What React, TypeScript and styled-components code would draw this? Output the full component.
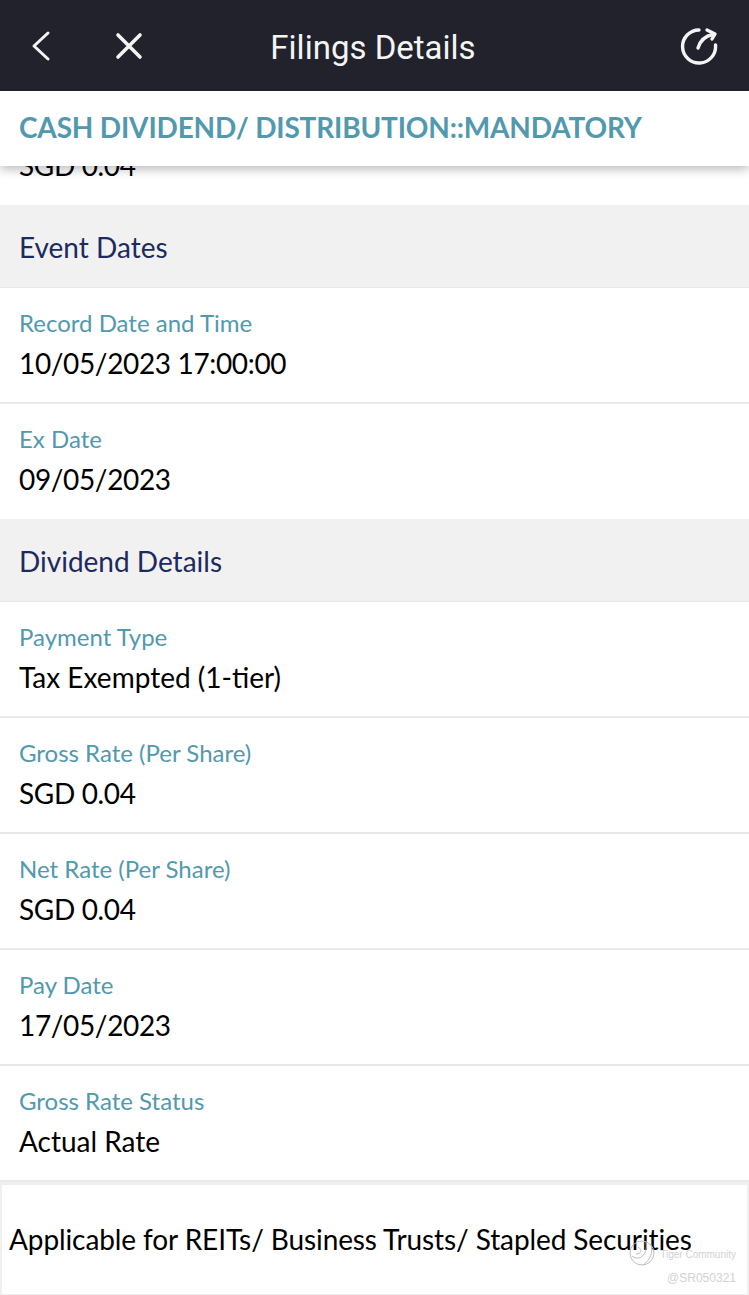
import React from 'react';
import styled, { createGlobalStyle } from 'styled-components';

const GlobalStyle = createGlobalStyle`
  html, body {
    margin: 0;
    padding: 0;
    background: #fff;
  }
  body {
    font-family: Lato, "Liberation Sans", sans-serif;
  }
`;

const Page = styled.div`
  width: 749px;
  height: 1295px;
  overflow: hidden;
  display: flex;
  flex-direction: column;
`;

const TopBar = styled.header`
  position: relative;
  z-index: 3;
  flex: none;
  height: 91px;
  background: #21222c;
  display: grid;
  grid-template-columns: 170px 1fr 170px;
  align-items: center;
  color: #f4f4f4;
`;

const NavLeft = styled.div`
  display: flex;
  align-items: center;
  gap: 57px;
  padding-left: 28px;
`;

const NavRight = styled.div`
  display: flex;
  justify-content: flex-end;
  padding-right: 31px;
`;

const IconSvg = styled.svg`
  display: block;
  fill: none;
  stroke: #f4f4f4;
  stroke-linecap: round;
  stroke-linejoin: round;
`;

const BarTitle = styled.h1`
  margin: 0;
  padding-right: 3px;
  text-align: center;
  font-family: Roboto, sans-serif;
  font-size: 33px;
  font-weight: 400;
  position: relative;
  top: 2px;
`;

const FilingType = styled.div`
  position: relative;
  z-index: 2;
  flex: none;
  height: 75px;
  background: #fff;
  box-shadow: 0 3px 10px rgba(0, 0, 0, 0.28);
  display: flex;
  align-items: center;
  padding: 0 0 3px 19px;
  box-sizing: border-box;
  font-size: 28px;
  font-weight: 700;
  letter-spacing: -0.17px;
  color: #5199ae;
`;

const Scroller = styled.main`
  flex: 1;
  min-height: 0;
  overflow: hidden;
`;

const ClippedValue = styled.div`
  height: 57px;
  margin-top: -18px;
  padding-left: 19px;
  font-size: 28px;
  line-height: 34px;
  letter-spacing: -0.35px;
  color: #000;
`;

const SectionHead = styled.div`
  height: 83px;
  box-sizing: border-box;
  background: #f1f1f2;
  border-bottom: 1px solid #e9e9e9;
  display: flex;
  align-items: center;
  padding: 2px 0 0 19px;
  font-size: 28px;
  color: #1d2a5e;
`;

const Row = styled.div<{ $last?: boolean }>`
  height: ${p => (p.$last ? 115 : 116)}px;
  box-sizing: border-box;
  padding: 20px 19px 0;
  border-bottom: ${p => (p.$last ? 'none' : '2px solid #e8e8e8')};
`;

const Label = styled.div`
  font-size: 24px;
  line-height: 30px;
  color: #5199ae;
`;

const Value = styled.div<{ $numeric?: boolean }>`
  margin-top: 8px;
  font-size: 28px;
  line-height: 34px;
  letter-spacing: ${p => (p.$numeric ? '-0.35px' : '0')};
  color: #000;
`;

const Notice = styled.div`
  position: relative;
  height: 113px;
  box-sizing: border-box;
  border: 3px solid #efefef;
  border-width: 3px 2px 1px;
  display: flex;
  align-items: center;
  padding: 0 0 2px 7px;
  font-size: 28px;
  letter-spacing: -0.1px;
  color: #000;
`;

const Watermark = styled.div`
  position: absolute;
  right: 11px;
  top: 57px;
  text-align: right;
  color: #d2d2d2;
  font-family: "Liberation Sans", sans-serif;
  letter-spacing: 0;
`;

const WatermarkLine = styled.div<{ $large?: boolean }>`
  display: flex;
  align-items: center;
  justify-content: flex-end;
  height: 24px;
  font-size: ${p => (p.$large ? 12 : 10)}px;
`;

const WatermarkLogo = styled.svg`
  position: absolute;
  left: -33px;
  top: -4px;
  fill: none;
  stroke: #bdbdbd;
  stroke-width: 1;
`;

const events = [
  { label: 'Record Date and Time', value: '10/05/2023 17:00:00', numeric: true },
  { label: 'Ex Date', value: '09/05/2023', numeric: true },
];

const dividend = [
  { label: 'Payment Type', value: 'Tax Exempted (1-tier)', numeric: false },
  { label: 'Gross Rate (Per Share)', value: 'SGD 0.04', numeric: true },
  { label: 'Net Rate (Per Share)', value: 'SGD 0.04', numeric: true },
  { label: 'Pay Date', value: '17/05/2023', numeric: true },
  { label: 'Gross Rate Status', value: 'Actual Rate', numeric: false },
];

function App() {
  return (
    <Page>
      <GlobalStyle />
      <TopBar>
        <NavLeft>
          <IconSvg width="30" height="32" viewBox="0 0 30 32" strokeWidth="3">
            <path d="M20 3 L6 16 L20 29" />
          </IconSvg>
          <IconSvg width="28" height="28" viewBox="0 0 28 28" strokeWidth="3.6">
            <path d="M3 3 L25 25 M25 3 L3 25" />
          </IconSvg>
        </NavLeft>
        <BarTitle>Filings Details</BarTitle>
        <NavRight>
          <IconSvg width="38" height="38" viewBox="0 0 38 38" strokeWidth="3.4">
            <path d="M19 3 A16.5 16.5 0 1 0 35.5 18" />
            <path d="M18 21 C20 14 25 9 33 7.5" />
            <path d="M27 3 L35 7 L32 12" />
          </IconSvg>
        </NavRight>
      </TopBar>
      <FilingType>CASH DIVIDEND/ DISTRIBUTION::MANDATORY</FilingType>
      <Scroller>
        <ClippedValue>SGD 0.04</ClippedValue>
        <SectionHead>Event Dates</SectionHead>
        {events.map((item, i) => (
          <Row key={item.label} $last={i === events.length - 1}>
            <Label>{item.label}</Label>
            <Value $numeric={item.numeric}>{item.value}</Value>
          </Row>
        ))}
        <SectionHead>Dividend Details</SectionHead>
        {dividend.map(item => (
          <Row key={item.label}>
            <Label>{item.label}</Label>
            <Value $numeric={item.numeric}>{item.value}</Value>
          </Row>
        ))}
        <Notice>
          Applicable for REITs/ Business Trusts/ Stapled Securities
          <Watermark>
            <WatermarkLine>
              <WatermarkLogo width="30" height="30" viewBox="0 0 30 30">
                <circle cx="15" cy="15" r="12" />
                <path d="M5 18 C13 24 21 16 19 4 M11 9 C16 12 14 16 9 16 M23 6 C27 12 24 22 16 27" />
              </WatermarkLogo>
              Tiger Community
            </WatermarkLine>
            <WatermarkLine $large>@SR050321</WatermarkLine>
          </Watermark>
        </Notice>
      </Scroller>
    </Page>
  );
}

export default App;
